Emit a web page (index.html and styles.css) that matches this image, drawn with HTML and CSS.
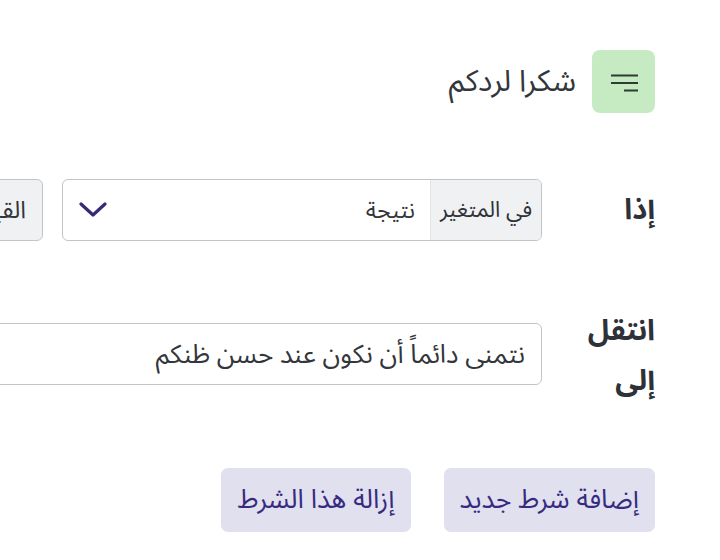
FILE: index.html
```html
<!DOCTYPE html>
<html lang="ar" dir="rtl">
<head>
<meta charset="utf-8">
<link rel="stylesheet" href="styles.css">
</head>
<body>
<div class="page">
  <header class="head">
    <button class="menu-btn" aria-label="menu">
      <svg width="28" height="20" viewBox="0 0 28 20"><path d="M1 3.5H28M1 11H28M14 18.5H28" stroke="#2f3b33" stroke-width="2.2" fill="none"/></svg>
    </button>
    <h1 class="title">شكرا لردكم</h1>
  </header>

  <div class="row row-if">
    <div class="label">إذا</div>
    <div class="field-line">
      <div class="group">
        <span class="prepend">في المتغير</span>
        <div class="select">
          <span class="select-text">نتيجة</span>
          <svg class="chev" width="28" height="16" viewBox="0 0 28 16"><path d="M2 2L14 13L26 2" stroke="#35297a" stroke-width="3.2" fill="none" stroke-linecap="round" stroke-linejoin="round"/></svg>
        </div>
      </div>
      <span class="side-btn">القيمة</span>
    </div>
  </div>

  <div class="row row-goto">
    <div class="label">انتقل إلى</div>
    <div class="text-input">نتمنى دائماً أن نكون عند حسن ظنكم</div>
  </div>

  <div class="actions">
    <button class="act">إضافة شرط جديد</button>
    <button class="act">إزالة هذا الشرط</button>
  </div>
</div>
</body>
</html>
```

FILE: styles.css
```css
html, body {
  margin: 0;
  padding: 0;
  background: #ffffff;
  overflow: hidden;
}
body {
  font-family: "Noto Sans Arabic", "Noto Sans", "DejaVu Sans", sans-serif;
  color: #33363b;
  width: 720px;
  height: 560px;
}
.page {
  padding: 50px 65px 0 0;
  display: flex;
  flex-direction: column;
}
.head {
  display: flex;
  align-items: center;
  gap: 16px;
}
.menu-btn {
  width: 63px;
  height: 63px;
  border: none;
  border-radius: 8px;
  background: #c6ebc2;
  display: flex;
  align-items: center;
  justify-content: center;
  padding: 0;
}
.title {
  margin: 0;
  font-size: 30px;
  font-weight: 400;
  color: #33363b;
}
.row {
  display: flex;
  align-items: flex-start;
  gap: 40px;
}
.row-if {
  margin-top: 66px;
}
.row-goto {
  margin-top: 82px;
}
.label {
  width: 73px;
  flex: none;
  font-size: 29px;
  font-weight: 700;
  color: #2e3138;
  line-height: 50px;
}
.row-if .label {
  line-height: 62px;
}
.row-goto .label {
  margin-top: -17px;
}
.field-line {
  display: flex;
  gap: 19px;
  flex: none;
}
.group {
  display: flex;
  width: 480px;
  height: 62px;
  border: 1px solid #c2c4c8;
  border-radius: 6px;
  overflow: hidden;
  box-sizing: border-box;
  font-size: 23px;
}
.prepend {
  width: 111px;
  flex: none;
  background: #f0f1f3;
  border-left: 1px solid #e2e4e7;
  display: flex;
  align-items: center;
  justify-content: center;
  box-sizing: border-box;
  color: #2f3238;
  font-size: 22px;
}
.select {
  flex: 1;
  display: flex;
  align-items: center;
  justify-content: space-between;
  padding: 0 15px 0 16px;
}
.chev {
  flex: none;
}
.side-btn {
  height: 62px;
  box-sizing: border-box;
  border: 1px solid #c2c4c8;
  border-radius: 6px;
  background: #f0f1f3;
  font-size: 24px;
  padding: 0 16px;
  display: flex;
  align-items: center;
  white-space: nowrap;
}
.text-input {
  flex: none;
  width: 640px;
  height: 62px;
  box-sizing: border-box;
  border: 1px solid #c2c4c8;
  border-radius: 6px;
  font-size: 26px;
  padding: 0 16px;
  display: flex;
  align-items: center;
  white-space: nowrap;
}
.actions {
  margin-top: 62px;
  display: flex;
  gap: 33px;
}
.act {
  height: 64px;
  border: none;
  border-radius: 7px;
  background: #e1e0ee;
  color: #362b80;
  font-family: inherit;
  font-size: 26.5px;
  padding: 0 16px;
}
```
